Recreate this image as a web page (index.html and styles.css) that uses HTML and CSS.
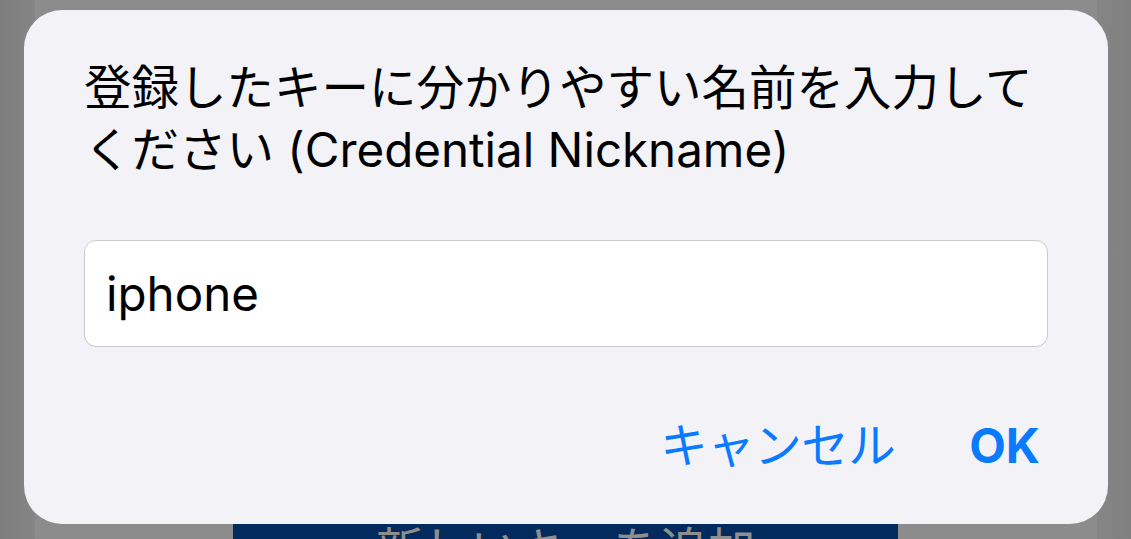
FILE: index.html
```html
<!DOCTYPE html>
<html lang="ja">
<head>
<meta charset="utf-8">
<title>Credential Nickname</title>
<link rel="stylesheet" href="styles.css">
</head>
<body>
<div class="page">
  <div class="add-button">新しいキーを追加</div>
</div>
<div class="dialog" role="dialog">
  <p class="dialog-message">登録したキーに分かりやすい名前を入力してください (Credential Nickname)</p>
  <div class="dialog-input">iphone</div>
  <div class="dialog-actions">
    <span class="action cancel">キャンセル</span>
    <span class="action ok">OK</span>
  </div>
</div>
</body>
</html>
```

FILE: styles.css
```css
html, body {
  margin: 0;
  padding: 0;
}

body {
  width: 1131px;
  height: 539px;
  overflow: hidden;
  background: linear-gradient(to right, #7d7d7d 0px, #858585 35px, #858585 1096px, #808080 1131px);
  font-family: "Inter", "Noto Sans CJK JP", sans-serif;
  position: relative;
}

.page {
  margin: 0 34px 0 35px;
  height: 539px;
  overflow: hidden;
  background: #8c8c8c;
  padding-top: 524px;
  box-sizing: border-box;
}

.add-button {
  margin-left: 198px;
  width: 665px;
  height: 90px;
  background: #022a5c;
  color: #8e8e8e;
  font-size: 47.5px;
  line-height: 1;
  text-align: center;
  padding-top: 2px;
  box-sizing: border-box;
}

.dialog {
  position: absolute;
  left: 24px;
  top: 10px;
  width: 1084px;
  height: 514px;
  box-sizing: border-box;
  border-radius: 38px;
  background: #f2f2f7;
  padding: 47px 60px 0 60px;
}

.dialog-message {
  margin: 0;
  font-size: 47.5px;
  line-height: 62px;
  color: #000;
}

.dialog-input {
  margin-top: 59px;
  height: 107px;
  box-sizing: border-box;
  background: #fff;
  border: 1px solid #c9c9ce;
  border-radius: 12px;
  padding-left: 21px;
  font-size: 47.5px;
  line-height: 105px;
  color: #000;
}

.dialog-actions {
  margin-top: 68px;
  display: flex;
  justify-content: flex-end;
  gap: 74px;
  padding-right: 8px;
  font-size: 47.5px;
  line-height: 62px;
  color: #0a7aff;
}

.action.cancel {
  letter-spacing: -0.5px;
}

.action.ok {
  font-weight: 700;
}
```
